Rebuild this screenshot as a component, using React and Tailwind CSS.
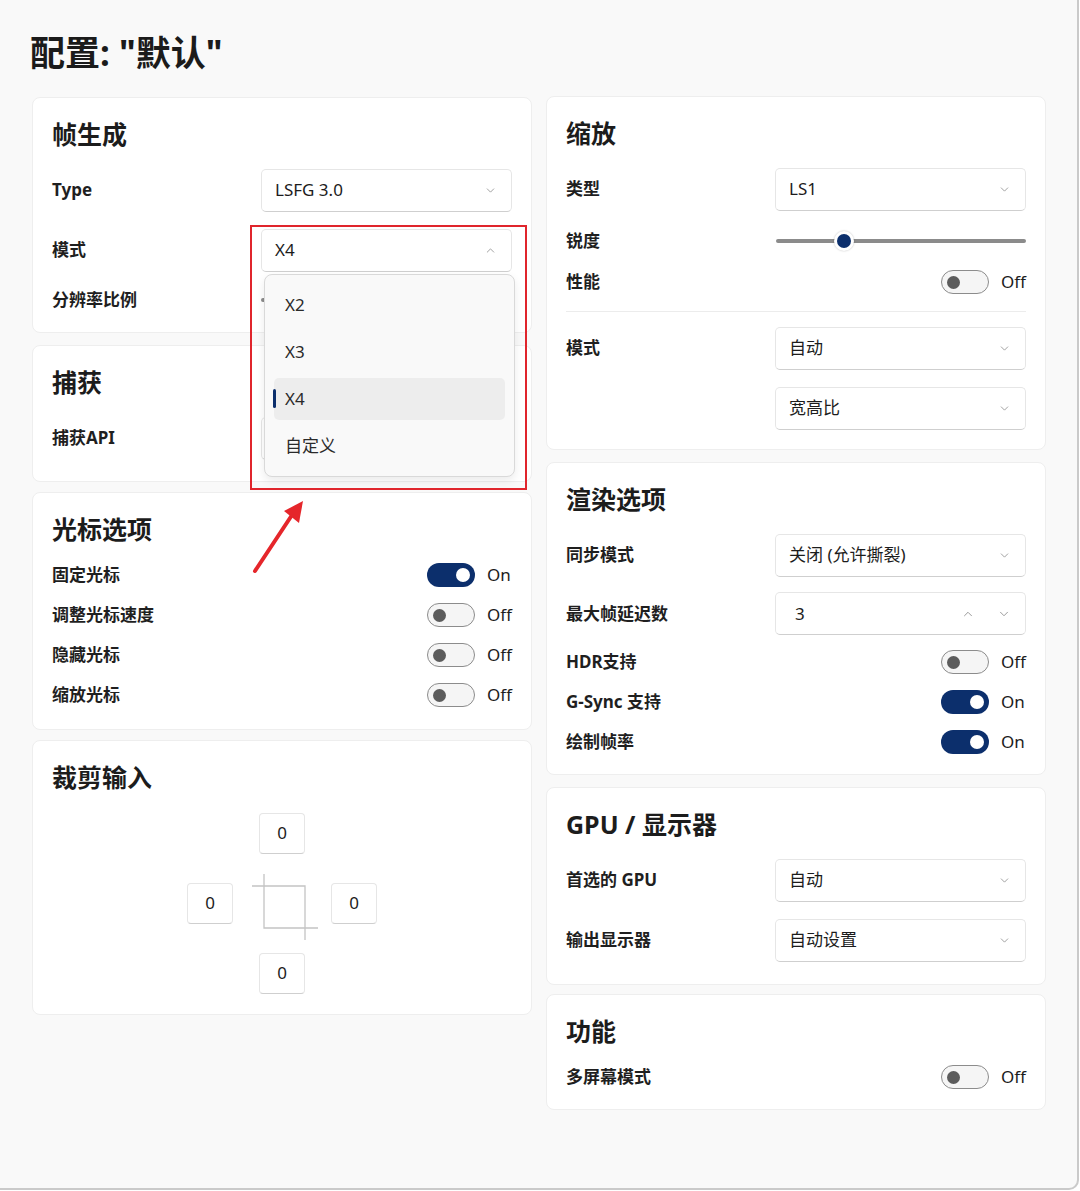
import React from 'react'
import { ChevronDown, ChevronUp } from 'lucide-react'

const font = "font-['Noto_Sans','Noto_Sans_CJK_SC',sans-serif]"

const Card = ({ title, className = '', children }) => (
  <div className={`w-[500px] rounded-lg bg-white border border-[#eeeeee] px-[19px] pt-5 ${className}`}>
    <div className="h-8 text-[25px] leading-8 font-bold text-[#1c1c1c] mb-[10px]">{title}</div>
    {children}
  </div>
)

const Label = ({ children }) => (
  <span className="text-[17px] font-bold text-[#1f1f1f]">{children}</span>
)

const Select = ({ value, up }) => (
  <div className="w-[251px] h-[43px] rounded-[5px] bg-white border border-[#e6e6e6] border-b-[#cfcfcf] flex items-center justify-between pl-[13px] pr-[14px] text-[17px] text-[#1c1c1c]">
    <span>{value}</span>
    {up ? (
      <ChevronUp size={13} strokeWidth={1.5} className="text-[#8d8d8d]" />
    ) : (
      <ChevronDown size={13} strokeWidth={1.5} className="text-[#8d8d8d]" />
    )}
  </div>
)

const SelectRow = ({ label, value, up }) => (
  <div className="h-[60px] flex items-center justify-between">
    <Label>{label}</Label>
    <Select value={value} up={up} />
  </div>
)

const Switch = ({ on }) => (
  <div className="flex items-center">
    {on ? (
      <div className="w-[48px] h-[24px] rounded-full bg-[#0c2f6c] flex items-center justify-end pr-[5px]">
        <div className="w-[14px] h-[14px] rounded-full bg-white" />
      </div>
    ) : (
      <div className="w-[48px] h-[24px] rounded-full bg-[#f5f5f5] border border-[#8c8c8c] flex items-center pl-[5px]">
        <div className="w-[13px] h-[13px] rounded-full bg-[#5c5c5c]" />
      </div>
    )}
    <span className="ml-[12px] w-[25px] text-[17px] text-[#1c1c1c]">{on ? 'On' : 'Off'}</span>
  </div>
)

const ToggleRow = ({ label, on }) => (
  <div className="h-[40px] flex items-center justify-between">
    <Label>{label}</Label>
    <Switch on={on} />
  </div>
)

const NumBox = ({ n }) => (
  <div className="w-[46px] h-[41px] rounded-[4px] bg-white border border-[#e6e6e6] border-b-[#cfcfcf] flex items-center justify-center text-[17px] text-[#1c1c1c]">
    {n}
  </div>
)

export default function App() {
  return (
    <div className={`relative w-[1080px] h-[1191px] bg-white ${font}`}>
      <div className="w-[1079px] h-[1190px] bg-[#f9f9f9] border-r-2 border-b-2 border-[#cacaca] rounded-br-[10px] pl-[30px] pt-[31px]">
        <h1 className="h-[44px] text-[35px] leading-[44px] font-bold text-[#1b1b1b]">配置: "默认"</h1>

        <div className="flex gap-[14px] mt-[21px] ml-[2px]">
          {/* left column */}
          <div className="flex flex-col pt-px">
            <Card title="帧生成" className="pb-[12px]">
              <SelectRow label="Type" value="LSFG 3.0" />
              <SelectRow label="模式" value="X4" up />
              <div className="h-[40px] flex items-center justify-between">
                <Label>分辨率比例</Label>
                <div className="w-[251px] h-[4px] rounded-full bg-[#8b8b8b]" />
              </div>
            </Card>

            <Card title="捕获" className="mt-[12px] pb-[13px]">
              <SelectRow label="捕获API" value="" />
            </Card>

            <Card title="光标选项" className="mt-[10px] pb-[14px]">
              <ToggleRow label="固定光标" on />
              <ToggleRow label="调整光标速度" />
              <ToggleRow label="隐藏光标" />
              <ToggleRow label="缩放光标" />
            </Card>

            <Card title="裁剪输入" className="mt-[10px] pb-[6px]">
              <div className="mt-[-5px] flex justify-center">
                <div className="grid grid-cols-[72px_72px_72px] grid-rows-[70px_70px_70px] place-items-center">
                  <div />
                  <NumBox n="0" />
                  <div />
                  <NumBox n="0" />
                  <svg width="70" height="70" viewBox="0 0 70 70" className="mt-[8px] ml-[4px]" fill="none" stroke="#c4c4c4" strokeWidth="1.3">
                    <path d="M3 14H56V68" />
                    <path d="M15 2V56H69" />
                  </svg>
                  <NumBox n="0" />
                  <div />
                  <NumBox n="0" />
                  <div />
                </div>
              </div>
            </Card>
          </div>

          {/* right column */}
          <div className="flex flex-col">
            <Card title="缩放" className="pb-[11px]">
              <SelectRow label="类型" value="LS1" />
              <div className="h-[44px] flex items-center justify-between">
                <Label>锐度</Label>
                <div className="relative w-[250px] h-[20px] flex items-center">
                  <div className="w-full h-[4px] rounded-full bg-[#8b8b8b]" />
                  <div className="absolute left-[58px] top-0 w-[20px] h-[20px] rounded-full bg-white shadow-[0_0_2px_rgba(0,0,0,0.25)] flex items-center justify-center">
                    <div className="w-[14px] h-[14px] rounded-full bg-[#0c2f6c]" />
                  </div>
                </div>
              </div>
              <div className="h-[38px] flex items-center justify-between">
                <Label>性能</Label>
                <Switch />
              </div>
              <div className="mt-[10px] h-px bg-[#ececec]" />
              <div className="mt-[6px]">
                <SelectRow label="模式" value="自动" />
                <div className="h-[60px] flex items-center justify-end">
                  <Select value="宽高比" />
                </div>
              </div>
            </Card>

            <Card title="渲染选项" className="mt-[12px] pb-[12px]">
              <SelectRow label="同步模式" value="关闭 (允许撕裂)" />
              <div className="h-[57px] flex items-center justify-between">
                <Label>最大帧延迟数</Label>
                <div className="w-[251px] h-[43px] rounded-[5px] bg-white border border-[#e6e6e6] border-b-[#cfcfcf] flex items-center pl-[19px] pr-[14px] text-[17px] text-[#1c1c1c]">
                  <span className="flex-1">3</span>
                  <ChevronUp size={14} strokeWidth={1.5} className="text-[#8d8d8d] mr-[22px]" />
                  <ChevronDown size={14} strokeWidth={1.5} className="text-[#8d8d8d]" />
                </div>
              </div>
              <ToggleRow label="HDR支持" />
              <ToggleRow label="G-Sync 支持" on />
              <ToggleRow label="绘制帧率" on />
            </Card>

            <Card title="GPU / 显示器" className="mt-[12px] pb-[14px]">
              <SelectRow label="首选的 GPU" value="自动" />
              <SelectRow label="输出显示器" value="自动设置" />
            </Card>

            <Card title="功能" className="mt-[9px] pb-[12px]">
              <ToggleRow label="多屏幕模式" />
            </Card>
          </div>
        </div>
      </div>

      {/* open dropdown menu */}
      <div className="absolute left-[264px] top-[274px] w-[251px] h-[203px] rounded-lg bg-[#f9f9f9] border border-[#d9d9d9] shadow-[0_4px_10px_rgba(0,0,0,0.08)] pt-[9px] px-[9px] flex flex-col gap-[5px]">
        {['X2', 'X3', 'X4', '自定义'].map((item) => (
          <div
            key={item}
            className={`relative h-[42px] rounded-[5px] flex items-center pl-[11px] text-[17px] text-[#2a2a2a] ${item === 'X4' ? 'bg-[#ededed]' : ''}`}
          >
            {item === 'X4' && <div className="absolute left-[-1px] top-[11px] w-[3px] h-[19px] rounded-full bg-[#0c2f6c]" />}
            {item}
          </div>
        ))}
      </div>

      {/* annotation */}
      <div className="absolute left-[250px] top-[225px] w-[277px] h-[265px] border-2 border-[#e0252c]" />
      <svg className="absolute left-0 top-0" width="400" height="600" viewBox="0 0 400 600">
        <line x1="255" y1="571" x2="292" y2="515" stroke="#e5262b" strokeWidth="4" strokeLinecap="round" />
        <polygon points="303,501 284,511 299,523" fill="#e5262b" />
      </svg>
    </div>
  )
}
